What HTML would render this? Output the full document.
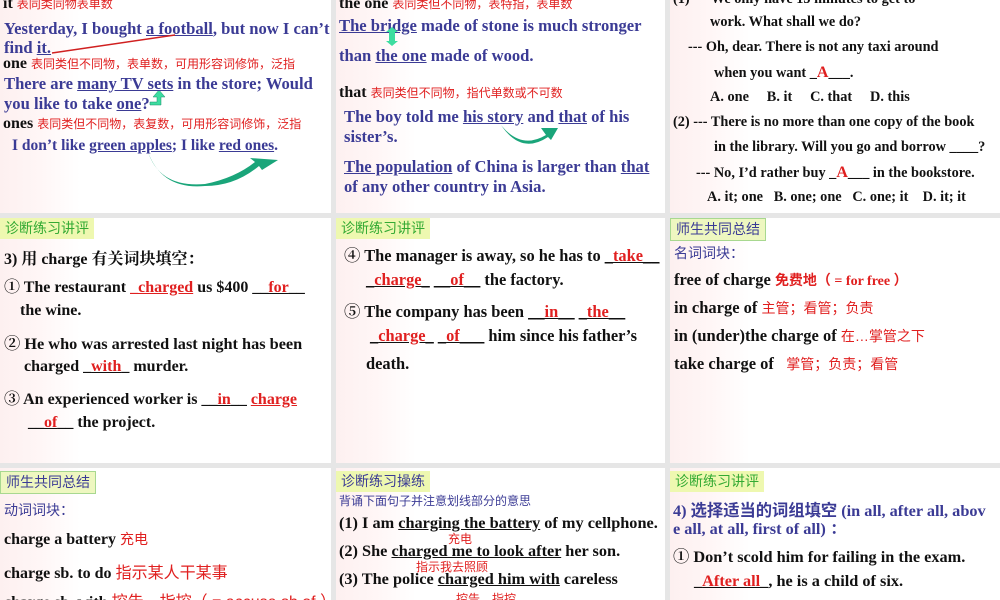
<!DOCTYPE html>
<html><head><meta charset="utf-8"><style>
body{margin:0;width:1000px;height:600px;background:#e6e6e6;position:relative;overflow:hidden;font-family:"Liberation Serif","Noto Serif CJK SC",serif;font-weight:bold;}
.p{position:absolute;background:#fff;overflow:hidden}
.p::before{content:"";position:absolute;left:0;top:0;bottom:0;width:80px;background:linear-gradient(90deg,#fdf0f0,#fff6f6 50%,#fff)}
.t{position:absolute;white-space:nowrap;font-size:16px;color:#111}
.b{color:#3b3b95}
.r{color:#e02020;font-family:"Liberation Sans","Noto Sans CJK SC",sans-serif;font-weight:normal;font-size:12px}
.rb{color:#e02020}
.u{text-decoration:underline}
.lab{position:absolute;font-family:"Liberation Sans","Noto Sans CJK SC",sans-serif;font-weight:normal;font-size:14px;padding:0 5px;height:21px;line-height:21px;background:#eef8b0;color:#33aa33}
.lab2{color:#3b3b95;background:#eef7c0;border:1px solid #a8d890}
.s{font-family:"Liberation Sans","Noto Sans CJK SC",sans-serif;font-weight:normal;font-size:13px;color:#3b3b95}
</style></head><body>
<!-- Row1 -->
<div class="p" style="left:0;top:0;width:331px;height:213px">
<div class="t" style="left:3px;top:-5px">it <span class="r">表同类同物表单数</span></div>
<div class="t b" style="left:4px;top:19px;font-size:16.6px">Yesterday, I bought <span class="u">a football</span>, but now I can’t</div>
<div class="t b" style="left:4px;top:38px;font-size:16.6px">find <span class="u">it.</span></div>
<svg style="position:absolute;left:0;top:0" width="331" height="213"><line x1="175" y1="35" x2="52" y2="53" stroke="#d02020" stroke-width="1.5"/>
<path d="M148 152 Q160 188 205 184 Q235 178 255 162 L250 158 L278 160 L262 170 L259 166 Q235 186 205 186 Q162 190 148 152Z" fill="#1aa57a"/>
<path d="M150 105 l11 0 l0 -8 l4 0 l-6 -7 l-6 7 l4 0 l0 5 l-7 0z" fill="#3ddda0" stroke="#1a8a6a" stroke-width=".5"/></svg>
<div class="t" style="left:3px;top:55px">one <span class="r">表同类但不同物，表单数，可用形容词修饰，泛指</span></div>
<div class="t b" style="left:4px;top:74px;font-size:16.6px">There are <span class="u">many TV sets</span> in the store; Would</div>
<div class="t b" style="left:4px;top:94px;font-size:16.6px">you like to take <span class="u">one</span>?</div>
<div class="t" style="left:3px;top:115px">ones <span class="r">表同类但不同物，表复数，可用形容词修饰，泛指</span></div>
<div class="t b" style="left:12px;top:137px;font-size:15.5px">I don’t like <span class="u">green apples</span>; I like <span class="u">red ones</span>.</div>
</div>
<div class="p" style="left:336px;top:0;width:329px;height:213px">
<div class="t" style="left:3px;top:-5px">the one <span class="r">表同类但不同物，表特指，表单数</span></div>
<div class="t b" style="left:3px;top:16px;font-size:16.6px"><span class="u">The bridge</span> made of stone is much stronger</div>
<div class="t b" style="left:3px;top:46px;font-size:16.6px">than <span class="u">the one</span> made of wood.</div>
<svg style="position:absolute;left:0;top:0" width="329" height="213"><path d="M50 32 l6 -5 l6 5 l-3 0 l0 9 l3 0 l-6 5 l-6 -5 l3 0 l0 -9z" fill="#3ddda0"/>
<path d="M165 125 Q185 150 210 135 L205 128 L222 128 L215 140 L212 137 Q185 155 165 125Z" fill="#1aa57a"/></svg>
<div class="t" style="left:3px;top:84px">that <span class="r">表同类但不同物，指代单数或不可数</span></div>
<div class="t b" style="left:8px;top:107px;font-size:16.6px">The boy told me <span class="u">his story</span> and <span class="u">that</span> of his</div>
<div class="t b" style="left:8px;top:127px;font-size:16.6px">sister’s.</div>
<div class="t b" style="left:8px;top:157px;font-size:16.6px"><span class="u">The population</span> of China is larger than <span class="u">that</span></div>
<div class="t b" style="left:8px;top:177px;font-size:16.6px">of any other country in Asia.</div>
</div>
<div class="p" style="left:670px;top:0;width:330px;height:213px">
<div class="t" style="left:3px;top:-9px;font-size:14.3px">(1) --- We only have 15 minutes to get to</div>
<div class="t" style="left:40px;top:14px;font-size:14.3px">work. What shall we do?</div>
<div class="t" style="left:18px;top:39px;font-size:14.3px">--- Oh, dear. There is not any taxi around</div>
<div class="t" style="left:44px;top:64px;font-size:14.3px">when you want _<span class="rb" style="font-size:16px">A</span>___.</div>
<div class="t" style="left:40px;top:89px;font-size:14.3px">A. one &nbsp;&nbsp;&nbsp; B. it &nbsp;&nbsp;&nbsp; C. that &nbsp;&nbsp;&nbsp; D. this</div>
<div class="t" style="left:3px;top:114px;font-size:14.3px">(2) --- There is no more than one copy of the book</div>
<div class="t" style="left:44px;top:139px;font-size:14.3px">in the library. Will you go and borrow ____?</div>
<div class="t" style="left:26px;top:164px;font-size:14.3px">--- No, I’d rather buy _<span class="rb" style="font-size:16px">A</span>___ in the bookstore.</div>
<div class="t" style="left:37px;top:189px;font-size:14.3px">A. it; one &nbsp; B. one; one &nbsp; C. one; it &nbsp;&nbsp; D. it; it</div>
</div>
<!-- Row2 -->
<div class="p" style="left:0;top:218px;width:331px;height:245px">
<div class="lab" style="left:0;top:0">诊断练习讲评</div>
<div class="t" style="left:4px;top:28px">3) 用 charge 有关词块填空：</div>
<div class="t" style="left:4px;top:56px;font-size:16px">① The restaurant <span class="u rb">_charged</span> us $400 <span class="u">__<span class="rb">for</span>__</span></div>
<div class="t" style="left:20px;top:84px;font-size:16px">the wine.</div>
<div class="t" style="left:4px;top:112px;font-size:16.3px">② He who was arrested last night has been</div>
<div class="t" style="left:24px;top:140px;font-size:16px">charged <span class="u">_<span class="rb">with</span>_</span> murder.</div>
<div class="t" style="left:4px;top:168px;font-size:16px">③ An experienced worker is <span class="u">__<span class="rb">in</span>__</span> <span class="u rb">charge</span></div>
<div class="t" style="left:28px;top:196px;font-size:16px"><span class="u">__<span class="rb">of</span>__</span> the project.</div>
</div>
<div class="p" style="left:336px;top:218px;width:329px;height:245px">
<div class="lab" style="left:0;top:0">诊断练习讲评</div>
<div class="t" style="left:8px;top:24px;font-size:16.4px">④ The manager is away, so he has to <span class="u">_<span class="rb">take</span>__</span></div>
<div class="t" style="left:30px;top:52px;font-size:16.4px"><span class="u">_<span class="rb">charge</span>_</span> <span class="u">__<span class="rb">of</span>__</span> the factory.</div>
<div class="t" style="left:8px;top:80px;font-size:16.4px">⑤ The company has been <span class="u">__<span class="rb">in</span>__</span> <span class="u">_<span class="rb">the</span>__</span></div>
<div class="t" style="left:34px;top:108px;font-size:16.4px"><span class="u">_<span class="rb">charge</span>_</span> <span class="u">_<span class="rb">of</span>___</span> him since his father’s</div>
<div class="t" style="left:30px;top:136px;font-size:16.4px">death.</div>
</div>
<div class="p" style="left:670px;top:218px;width:330px;height:245px">
<div class="lab lab2" style="left:0;top:0">师生共同总结</div>
<div class="t s" style="left:4px;top:25px;font-size:14px">名词词块：</div>
<div class="t" style="left:4px;top:52px;font-size:16.5px">free of charge <span class="rb" style="font-family:'Liberation Serif','Noto Sans CJK SC',serif;font-size:14px">免费地（ = for free ）</span></div>
<div class="t" style="left:4px;top:80px;font-size:16.5px">in charge of <span class="r" style="font-size:14px">主管；看管；负责</span></div>
<div class="t" style="left:4px;top:108px;font-size:16.5px">in (under)the charge of <span class="r" style="font-size:14px">在…掌管之下</span></div>
<div class="t" style="left:4px;top:136px;font-size:16.5px">take charge of &nbsp; <span class="r" style="font-size:14px">掌管；负责；看管</span></div>
</div>
<!-- Row3 -->
<div class="p" style="left:0;top:468px;width:331px;height:132px">
<div class="lab lab2" style="left:0;top:3px">师生共同总结</div>
<div class="t s" style="left:4px;top:32px;font-size:14px">动词词块：</div>
<div class="t" style="left:4px;top:61px">charge a battery <span class="r" style="font-size:14px">充电</span></div>
<div class="t" style="left:4px;top:91px">charge sb. to do <span class="r" style="font-size:16px">指示某人干某事</span></div>
<div class="t" style="left:4px;top:120px">charge sb. with <span class="r" style="font-size:16px">控告，指控（ = accuse sb of ）</span></div>
</div>
<div class="p" style="left:336px;top:468px;width:329px;height:132px">
<div class="lab" style="left:0;top:3px;color:#3b3b95">诊断练习操练</div>
<div class="t s" style="left:3px;top:24px;font-size:12px">背诵下面句子并注意划线部分的意思</div>
<div class="t" style="left:3px;top:45px;font-size:16.3px">(1) I am <span class="u">charging the battery</span> of my cellphone.</div>
<div class="t r" style="left:112px;top:62px">充电</div>
<div class="t" style="left:3px;top:73px;font-size:16.3px">(2) She <span class="u">charged me to look after</span> her son.</div>
<div class="t r" style="left:80px;top:90px">指示我去照顾</div>
<div class="t" style="left:3px;top:101px;font-size:16.3px">(3) The police <span class="u">charged him with</span> careless</div>
<div class="t r" style="left:120px;top:122px">控告，指控</div>
</div>
<div class="p" style="left:670px;top:468px;width:330px;height:132px">
<div class="lab" style="left:0;top:3px">诊断练习讲评</div>
<div class="t b" style="left:3px;top:29px;font-family:'Liberation Serif','Noto Sans CJK SC',serif;font-size:16.3px">4) 选择适当的词组填空 (in all, after all, abov</div>
<div class="t b" style="left:3px;top:47px;font-size:16.3px">e all, at all, first of all) ：</div>
<div class="t" style="left:3px;top:75px;font-size:16.3px">① Don’t scold him for failing in the exam.</div>
<div class="t" style="left:24px;top:103px;font-size:16.3px"><span class="u">_<span class="rb">After all</span>_</span>, he is a child of six.</div>
</div>
</body></html>
